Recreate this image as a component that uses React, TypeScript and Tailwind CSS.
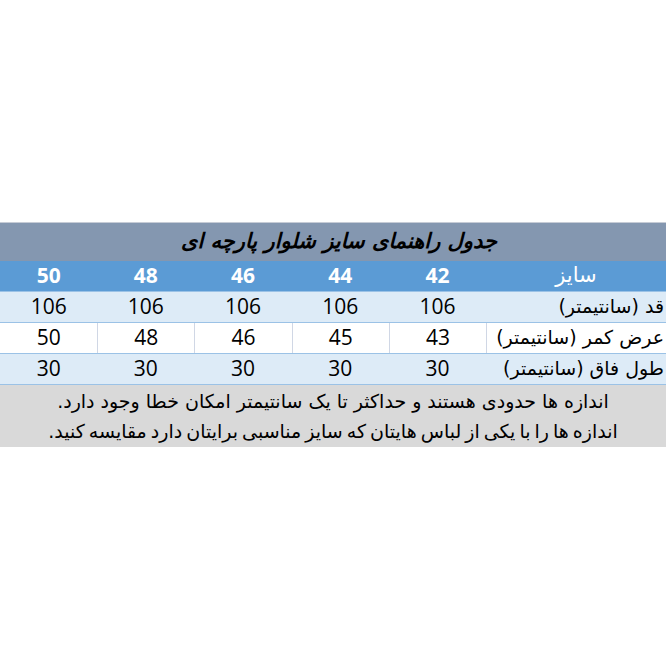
const sizes = ['42', '44', '46', '48', '50'];

const rows = [
  { label: 'قد (سانتیمتر)', values: ['106', '106', '106', '106', '106'], light: true },
  { label: 'عرض کمر (سانتیمتر)', values: ['43', '45', '46', '48', '50'], light: false },
  { label: 'طول فاق (سانتیمتر)', values: ['30', '30', '30', '30', '30'], light: true },
];

export default function App() {
  return (
    <div className="min-h-[668px] w-[668px] bg-white flex items-center">
      <div dir="rtl" className="w-[666px] ml-0 mr-auto font-['DejaVu_Sans',sans-serif]">
        <div className="h-[39px] bg-[#8497b0] border-t border-[#c6ccd6] flex items-center justify-center pl-[12px]">
          <span className="text-[21px] font-bold italic text-black">جدول راهنمای سایز شلوار پارچه ای</span>
        </div>

        <div className="h-[31px] bg-[#5b9bd5] flex items-center border-b border-[#9bc2e6]">
          <div className="w-[180px] text-center text-[21px] text-white">سایز</div>
          {sizes.map((s) => (
            <div key={s} className="w-[97.2px] text-center text-[21px] font-bold text-white font-['Open_Sans',sans-serif]">
              {s}
            </div>
          ))}
        </div>

        {rows.map((r) => (
          <div key={r.label} className={`h-[31px] flex border-b border-[#9bc2e6] ${r.light ? 'bg-[#ddebf7]' : 'bg-white'}`}>
            <div
              className={`w-[180px] flex items-center pr-[2px] text-[19px] text-black whitespace-nowrap ${r.light ? '' : 'border-l border-[#d0d7e5]'}`}
            >
              {r.label}
            </div>
            {r.values.map((v, i) => (
              <div
                key={i}
                className={`w-[97.2px] flex items-center justify-center text-[21px] text-black font-['Open_Sans',sans-serif] ${i < 4 && !r.light ? 'border-l border-[#d0d7e5]' : ''}`}
              >
                {v}
              </div>
            ))}
          </div>
        ))}

        <div className="bg-[#d9d9d9] h-[62px] flex flex-col items-center justify-center text-[19px] text-black leading-[30px]">
          <p>اندازه ها حدودی هستند و حداکثر تا یک سانتیمتر امکان خطا وجود دارد.</p>
          <p className="[word-spacing:-2px]">اندازه ها را  با یکی از لباس هایتان که سایز مناسبی برایتان دارد مقایسه کنید.</p>
        </div>
      </div>
    </div>
  );
}
